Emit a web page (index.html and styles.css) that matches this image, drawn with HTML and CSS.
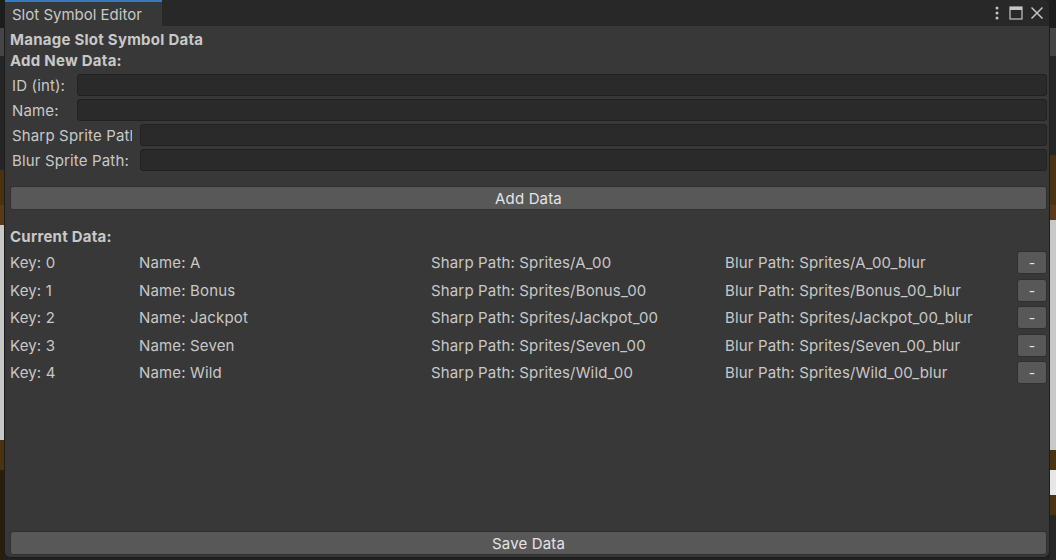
FILE: index.html
```html
<!DOCTYPE html>
<html lang="en">
<head>
<meta charset="utf-8">
<title>Slot Symbol Editor</title>
<link rel="stylesheet" href="styles.css">
</head>
<body>
<div class="window">
  <div class="tabbar">
    <div class="tab">Slot Symbol Editor</div>
    <div class="tab-actions">
      <svg class="ico" width="10" height="16" viewBox="0 0 10 16"><circle cx="5" cy="3" r="1.5" fill="#c4c4c4"/><circle cx="5" cy="8" r="1.5" fill="#c4c4c4"/><circle cx="5" cy="13" r="1.5" fill="#c4c4c4"/></svg>
      <svg class="ico" width="14" height="14" viewBox="0 0 14 14"><rect x="1" y="1" width="12" height="12" fill="none" stroke="#c4c4c4" stroke-width="1.2"/><rect x="1" y="1" width="12" height="3" fill="#c4c4c4"/></svg>
      <svg class="ico" width="14" height="14" viewBox="0 0 14 14"><path d="M1.5 1.5 L12.5 12.5 M12.5 1.5 L1.5 12.5" stroke="#c4c4c4" stroke-width="1.5" fill="none"/></svg>
    </div>
  </div>
  <div class="content">
    <div class="heading h-first">Manage Slot Symbol Data</div>
    <div class="heading">Add New Data:</div>
    <div class="fields">
      <div class="field-row"><span class="label label-short">ID (int):</span><div class="input"></div></div>
      <div class="field-row"><span class="label label-short">Name:</span><div class="input"></div></div>
      <div class="field-row"><span class="label label-long">Sharp Sprite Path:</span><div class="input"></div></div>
      <div class="field-row"><span class="label label-long">Blur Sprite Path:</span><div class="input"></div></div>
    </div>
    <div class="btn btn-wide btn-add">Add Data</div>
    <div class="heading h-current">Current Data:</div>
    <div class="data">
      <div class="data-row"><span>Key: 0</span><span>Name: A</span><span>Sharp Path: Sprites/A_00</span><span>Blur Path: Sprites/A_00_blur</span><div class="btn btn-mini">-</div></div>
      <div class="data-row"><span>Key: 1</span><span>Name: Bonus</span><span>Sharp Path: Sprites/Bonus_00</span><span>Blur Path: Sprites/Bonus_00_blur</span><div class="btn btn-mini">-</div></div>
      <div class="data-row"><span>Key: 2</span><span>Name: Jackpot</span><span>Sharp Path: Sprites/Jackpot_00</span><span>Blur Path: Sprites/Jackpot_00_blur</span><div class="btn btn-mini">-</div></div>
      <div class="data-row"><span>Key: 3</span><span>Name: Seven</span><span>Sharp Path: Sprites/Seven_00</span><span>Blur Path: Sprites/Seven_00_blur</span><div class="btn btn-mini">-</div></div>
      <div class="data-row"><span>Key: 4</span><span>Name: Wild</span><span>Sharp Path: Sprites/Wild_00</span><span>Blur Path: Sprites/Wild_00_blur</span><div class="btn btn-mini">-</div></div>
    </div>
    <div class="btn btn-wide btn-save">Save Data</div>
  </div>
</div>
</body>
</html>
```
FILE: styles.css
```css
* { box-sizing: border-box; }
html, body { margin: 0; height: 100%; }
body {
  width: 1056px;
  height: 560px;
  overflow: hidden;
  position: relative;
  font-family: Inter, "Noto Sans", sans-serif;
  font-size: 15px;
  letter-spacing: 0.15px;
  color: #c8c8c8;
  background:
    linear-gradient(to bottom, #1d1d1d 0 28px, #454545 28px 56px, #262626 56px 170px, #4a3312 170px 205px, #5a3a1c 205px 225px, #c8c8c8 225px 440px, #4a3312 440px 470px, #2b1d0e 470px 560px) left top / 4px 100% no-repeat,
    linear-gradient(to bottom, #1d1d1d 0 28px, #454545 28px 56px, #262626 56px 155px, #4a3312 155px 205px, #5a3a1c 205px 220px, #c8c8c8 220px 450px, #4a3312 450px 470px, #e6e6e6 470px 495px, #4a3312 495px 515px, #262626 515px 560px) right top / 6px 100% no-repeat,
    #222222;
}
.window {
  position: absolute;
  left: 4px;
  top: 0;
  width: 1046px;
  height: 558px;
  background: #383838;
  border: 1px solid #1c1c1c;
  border-top: none;
  border-radius: 0 6px 6px 6px;
  display: flex;
  flex-direction: column;
  overflow: hidden;
}
.tabbar {
  height: 26px;
  flex: none;
  background: #282828;
  display: flex;
  align-items: stretch;
}
.tab {
  width: 158px;
  margin-left: -1px;
  background: #383838;
  border-top: 2px solid #3a79bb;
  padding-left: 8px;
  display: flex;
  align-items: center;
  font-size: 15px;
  letter-spacing: 0;
  color: #c8c8c8;
}
.tab-actions {
  margin-left: auto;
  display: flex;
  align-items: center;
  gap: 7px;
  padding-right: 5px;
}
.ico { display: block; }
.content {
  flex: 1;
  display: flex;
  flex-direction: column;
  padding: 3px 2px 2px 5px;
}
.heading {
  height: 21px;
  line-height: 21px;
  font-weight: 700;
  letter-spacing: 0.25px;
}
.fields {
  margin-top: 3px;
  display: flex;
  flex-direction: column;
  gap: 3px;
}
.field-row {
  height: 22px;
  display: flex;
  align-items: center;
}
.label {
  padding-left: 2px;
  white-space: nowrap;
  overflow: hidden;
  flex: none;
}
.label-short { width: 67px; }
.label-long { width: 122px; margin-right: 8px; }
.input {
  flex: 1;
  height: 22px;
  background: #2a2a2a;
  border: 1px solid #212121;
  border-radius: 3px;
}
.btn {
  background: #585858;
  border: 1px solid #303030;
  border-radius: 3px;
  color: #e4e4e4;
  display: flex;
  align-items: center;
  justify-content: center;
}
.btn-wide { height: 24px; }
.btn-add { margin-top: 15px; }
.h-current { margin-top: 16px; }
.data {
  margin-top: 4px;
  display: flex;
  flex-direction: column;
  gap: 4.5px;
}
.data-row {
  height: 23px;
  display: grid;
  grid-template-columns: 129px 292px 294px 1fr 30px;
  align-items: center;
  white-space: nowrap;
}
.btn-mini { height: 23px; font-size: 14px; }
.btn-save { margin-top: auto; }
```
